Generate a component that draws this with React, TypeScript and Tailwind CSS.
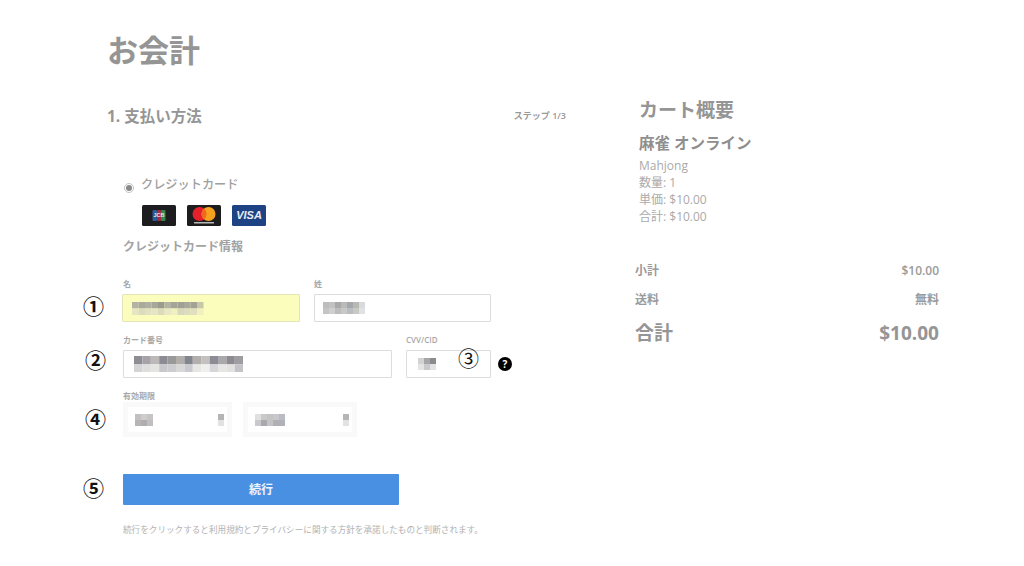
import React from "react";

const FONT = "font-['Open_Sans','Noto_Sans_CJK_JP',sans-serif]";

// pixelated (blurred out) values in the form, two rows of grey cells
function Mosaic({ top, bottom, cell = 6 }: { top: string[]; bottom: string[]; cell?: number }) {
  return (
    <svg width={top.length * cell} height={cell * 2} className="block shrink-0" aria-hidden>
      {top.map((c, i) => (
        <rect key={i} x={i * cell} y={0} width={cell} height={cell} fill={c} />
      ))}
      {bottom.map((c, i) => (
        <rect key={i} x={i * cell} y={cell} width={cell} height={cell} fill={c} />
      ))}
    </svg>
  );
}

function Field({
  label,
  className,
  children,
}: {
  label: string;
  className?: string;
  children: React.ReactNode;
}) {
  return (
    <div className={className}>
      <div className="h-[12px] text-[8px] leading-[10px] font-semibold text-[#a8a8a8]">{label}</div>
      {children}
    </div>
  );
}

function SelectBox({ width, children }: { width: string; children: React.ReactNode }) {
  return (
    <div className={`${width} h-[35px] bg-[#f9f9f9] p-[5px]`}>
      <div className="flex h-full items-center justify-between bg-white pl-[7px] pr-[3px]">
        {children}
        <Mosaic top={["#b5b5b8"]} bottom={["#e2e2e2"]} cell={6} />
      </div>
    </div>
  );
}

function CardLogos() {
  return (
    <div className="mt-[8px] ml-[19px] flex gap-[11px]">
      <svg width="34" height="21" viewBox="0 0 34 21">
        <rect width="34" height="21" rx="1.5" fill="#1d1d1f" />
        <rect x="10.5" y="5" width="4.5" height="11" rx="1" fill="#2a5c9c" />
        <rect x="15" y="5" width="4" height="11" rx="1" fill="#a52b3c" />
        <rect x="19" y="5" width="4.5" height="11" rx="1" fill="#2f8a4f" />
        <text
          x="17"
          y="12.4"
          textAnchor="middle"
          fontSize="5.5"
          fontWeight="700"
          fill="#e6e6e6"
          fontFamily="'Liberation Sans',sans-serif"
        >
          JCB
        </text>
      </svg>
      <svg width="34" height="21" viewBox="0 0 34 21">
        <rect width="34" height="21" rx="1.5" fill="#1d1d1f" />
        <circle cx="12.5" cy="9" r="7" fill="#e3202b" />
        <circle cx="21.5" cy="9" r="7" fill="#f6a21e" />
        <path d="M17 3.6a7 7 0 0 1 0 10.8a7 7 0 0 1 0-10.8z" fill="#f2681f" />
        <rect x="7" y="17" width="20" height="1.5" fill="#b9b9b9" />
      </svg>
      <div className="flex h-[21px] w-[34px] items-center justify-center rounded-[1.5px] bg-[#1d4384] font-['Liberation_Sans',sans-serif] text-[11px] font-bold italic text-[#e9edf5]">
        VISA
      </div>
    </div>
  );
}

function Annotation({ className, children }: { className: string; children: React.ReactNode }) {
  return (
    <span
      className={`absolute font-['Noto_Sans_CJK_JP',sans-serif] text-[21px] leading-none text-[#111] ${className}`}
    >
      {children}
    </span>
  );
}

export default function App() {
  return (
    <div className={`relative h-[566px] w-[1024px] overflow-hidden bg-white text-[#9a9a9a] ${FONT}`}>
      <div className="pl-[108px] pt-[30px]">
        <h1 className="-ml-px h-[40px] text-[31px] leading-[40px] font-bold text-[#959595]">お会計</h1>

        <div className="mt-[25px] flex">
          {/* Left column */}
          <div className="w-[458px]">
            <div className="flex h-[42px] items-center justify-between">
              <h2 className="-ml-px pt-[2px] text-[15.5px] font-bold text-[#959595]">1. 支払い方法</h2>
              <span className="text-[9px] font-semibold text-[#999]">ステップ 1/3</span>
            </div>

            <div className="pl-[15px]">
              <div className="mt-[36px] flex h-[24px] items-center">
                <span className="ml-px mt-[5px] flex size-[10px] items-center justify-center rounded-full border border-[#c4c4c4]">
                  <span className="size-[6px] rounded-full bg-[#8a8a8a]" />
                </span>
                <span className="ml-[7px] text-[12.2px] font-medium text-[#a0a0a0]">クレジットカード</span>
              </div>
              <CardLogos />
              <h3 className="mt-[12px] h-[18px] text-[12px] leading-[18px] font-bold text-[#a3a3a3]">
                クレジットカード情報
              </h3>

              <div className="mt-[23px] flex">
                <Field label="名" className="w-[191px]">
                  <div className="-ml-px mt-[3px] flex h-[28px] w-[178px] items-center rounded-[1px] border border-[#e4e4bb] bg-[#fbfdbc] pl-[9px]">
                    <Mosaic
                      cell={6.5}
                      top={["#b3b3a4", "#a9a99c", "#b0b0a0", "#a7a79c", "#9c9c8e", "#b4b4a4", "#a4a498", "#a0a094", "#a8a89c", "#a2a296", "#c8c8a8"]}
                      bottom={["#e6e6c4", "#dcdcbe", "#e2e2c0", "#e6e6c4", "#dcdcbc", "#e8e8c6", "#f0f0c0", "#d8d8bc", "#dcdcbe", "#e0e0c0", "#f0f0c0"]}
                    />
                  </div>
                </Field>
                <Field label="姓">
                  <div className="mt-[3px] flex h-[28px] w-[177px] items-center rounded-[1px] border border-[#dcdcdc] bg-white pl-[8px]">
                    <Mosaic
                      top={["#bdbdbd", "#c2c2c2", "#a9a9a9", "#bababa", "#a4a8ad", "#b9b9b4", "#d8dade"]}
                      bottom={["#c4c4c4", "#cfcfcf", "#bcbcbc", "#c8c8c8", "#b9bcc0", "#c8c8c4", "#dfe1e4"]}
                    />
                  </div>
                </Field>
              </div>

              <div className="mt-[13px] flex">
                <Field label="カード番号" className="w-[283px]">
                  <div className="mt-[3px] flex h-[28px] w-[269px] items-center rounded-[1px] border border-[#dcdcdc] bg-white pl-[10px]">
                    <Mosaic
                      top={["#8f8d94", "#a5a3a8", "#bcbab8", "#8d8b93", "#9b989a", "#b2afaa", "#83858e", "#b2b0ad", "#c4c2c0", "#8c8c96", "#aaa8aa", "#8d8b92", "#9f9da1"]}
                      bottom={["#d4d4d6", "#dedede", "#e4e4e2", "#c8c8cc", "#cdcdd0", "#d8d8d6", "#c9cacf", "#e6e6e4", "#efefed", "#d6d6da", "#e6e6e4", "#e2e2e0", "#c4c4c8"]}
                      cell={8.4}
                    />
                  </div>
                </Field>
                <Field label="CVV/CID" className="w-[85px]">
                  <div className="mt-[3px] flex h-[28px] w-[85px] items-center rounded-[1px] border border-[#dcdcdc] bg-white pl-[11px]">
                    <Mosaic
                      top={["#d2d2d2", "#a6a6a8", "#8b8b8d"]}
                      bottom={["#e4e4e4", "#c9c9cb", "#e2e2e4"]}
                    />
                  </div>
                </Field>
                <span className="ml-[7px] mt-[22px] flex size-[14px] items-center justify-center rounded-full bg-black text-[10px] leading-none font-bold text-white">
                  ?
                </span>
              </div>

              <Field label="有効期限" className="mt-[13px]">
                <div className="-mt-px flex gap-[11px]">
                  <SelectBox width="w-[109px]">
                    <Mosaic top={["#c4c0c0", "#cfcccc", "#c6c4c4"]} bottom={["#b8b4b6", "#aeaeb2", "#c0bebe"]} />
                  </SelectBox>
                  <SelectBox width="w-[114px]">
                    <Mosaic
                      top={["#e0e0e0", "#c9c9c9", "#c4c4c4", "#c8c8cc", "#b9bcc4"]}
                      bottom={["#c9c9cb", "#a9a9ad", "#c4c4c6", "#b0b0b4", "#b0b2b8"]}
                    />
                  </SelectBox>
                </div>
              </Field>

              <button className="mt-[37px] flex h-[31px] w-[276px] items-center justify-center rounded-[1px] bg-[#4a90e2] text-[12px] font-bold text-[#eef4fc]">
                続行
              </button>
              <p className="mt-[18px] text-[8.6px] leading-[14px] text-[#b2b2b2]">
                続行をクリックすると利用規約とプライバシーに関する方針を承諾したものと判断されます。
              </p>
            </div>
          </div>

          {/* Right column */}
          <div className="ml-[69px] w-[304px]">
            <div className="pl-[4px]">
              <h2 className="mt-[1px] h-[28px] text-[19px] leading-[28px] font-bold text-[#959595]">カート概要</h2>
              <div className="mt-[7px] h-[24px] text-[15.5px] leading-[24px] font-bold text-[#8f8f8f]">麻雀 オンライン</div>
              <div className="mt-[2px] text-[12px] leading-[17px] text-[#aaa]">
                <div>Mahjong</div>
                <div>数量: 1</div>
                <div>単価: $10.00</div>
                <div>合計: $10.00</div>
              </div>
            </div>
            <div className="mt-[37px] flex h-[18px] items-center justify-between text-[12px] font-semibold text-[#9a9a9a]">
              <span>小計</span>
              <span>$10.00</span>
            </div>
            <div className="mt-[11px] flex h-[18px] items-center justify-between text-[12px] font-semibold text-[#9a9a9a]">
              <span>送料</span>
              <span>無料</span>
            </div>
            <div className="mt-[10px] flex h-[28px] items-center justify-between text-[19px] font-bold text-[#959595]">
              <span>合計</span>
              <span>$10.00</span>
            </div>
          </div>
        </div>
      </div>

      <Annotation className="left-[83px] top-[295px] font-semibold">①</Annotation>
      <Annotation className="left-[85px] top-[349px] font-semibold">②</Annotation>
      <Annotation className="left-[458px] top-[347px]">③</Annotation>
      <Annotation className="left-[85px] top-[408px] font-semibold">④</Annotation>
      <Annotation className="left-[83px] top-[477px] font-semibold">⑤</Annotation>
    </div>
  );
}
